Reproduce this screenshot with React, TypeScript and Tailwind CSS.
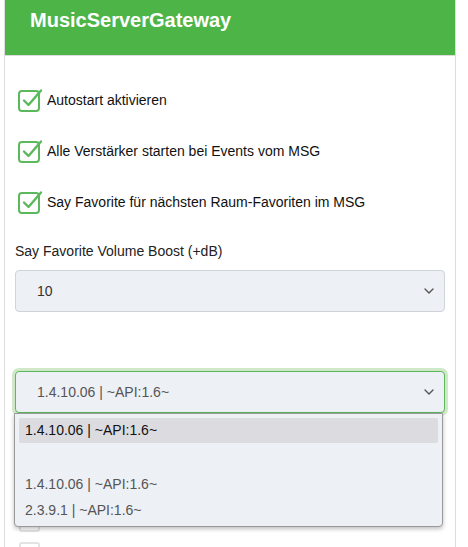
import React from "react";

const font = { fontFamily: '"Liberation Sans", Arial, sans-serif' };

function CheckBox({ checked }: { checked: boolean }) {
  if (!checked) {
    return <div className="w-[21px] h-[21px] rounded-[3px] border-2 border-[#e3e3e3] bg-white shrink-0" />;
  }
  return (
    <svg width="26" height="26" viewBox="0 0 26 26" className="shrink-0 -mt-[3px]">
      <rect x="1" y="5" width="20" height="20" rx="3" fill="none" stroke="#5cb85c" strokeWidth="2" />
      <path d="M6 14.5 L10.5 19 L23 4.5" fill="none" stroke="#5cb85c" strokeWidth="2.4" strokeLinecap="round" strokeLinejoin="round" />
    </svg>
  );
}

function Chevron() {
  return (
    <svg width="10" height="6" viewBox="0 0 10 6" className="shrink-0">
      <path d="M1 1 L5 5 L9 1" fill="none" stroke="#555" strokeWidth="1.4" strokeLinecap="round" strokeLinejoin="round" />
    </svg>
  );
}

const checks = [
  "Autostart aktivieren",
  "Alle Verstärker starten bei Events vom MSG",
  "Say Favorite für nächsten Raum-Favoriten im MSG",
];

const versions = ["1.4.10.06 | ~API:1.6~", "", "1.4.10.06 | ~API:1.6~", "2.3.9.1 | ~API:1.6~"];

export default function App() {
  return (
    <div className="bg-white w-[468px] h-[547px] overflow-hidden" style={font}>
      <div className="ml-[4px] w-[452px] h-[547px] border-x border-[#dddddd]">
        <div className="h-[56px] bg-[#4db548] border-b border-[#dcdcdc] pl-[25px] pt-[8px]">
          <h1 className="text-white font-bold text-[20px] leading-[24px]">MusicServerGateway</h1>
        </div>

        <div className="px-[10px]">
          <div className="pt-[33px] flex flex-col gap-[29px]">
            {checks.map((c) => (
              <div key={c} className="flex items-center gap-[3px] pl-[3px] h-[22px]">
                <CheckBox checked />
                <span className="text-[14px] text-[#111]">{c}</span>
              </div>
            ))}
          </div>

          <div className="mt-[29px] text-[14px] text-[#222] leading-[18px]">Say Favorite Volume Boost (+dB)</div>

          <div className="mt-[10px] h-[42px] rounded-[4px] border border-[#ced4da] bg-[#edf0f4] flex items-center justify-between pl-[21px] pr-[10px]">
            <span className="text-[14px] text-[#333]">10</span>
            <Chevron />
          </div>

          <div className="relative mt-[59px]">
            <div className="h-[42px] rounded-[4px] border border-[#5cb85c] bg-[#edf0f4] shadow-[0_0_0_3px_#cfe8c8] flex items-center justify-between pl-[21px] pr-[10px]">
              <span className="text-[14px] text-[#555]">1.4.10.06 | ~API:1.6~</span>
              <Chevron />
            </div>

            <div className="mt-[97px] flex flex-col gap-[9px] pl-[4px]">
              <div className="flex items-center gap-[8px] h-[22px]">
                <CheckBox checked={false} />
              </div>
              <div className="flex items-center gap-[8px] h-[22px]">
                <CheckBox checked={false} />
                <span className="text-[14px] text-[#111]">Sonos</span>
              </div>
            </div>

            <div className="absolute left-[-1px] top-[42px] w-[429px] h-[114px] rounded-b-[4px] border border-[#9a9a9a] bg-[#edf0f4] shadow-[0_2px_4px_rgba(0,0,0,0.25)] px-[4px] pt-[4px]">
              {versions.map((v, i) => (
                <div
                  key={i}
                  className={
                    i === 0
                      ? "h-[25px] rounded-[2px] bg-[#dcdbe0] flex items-center pl-[6px] text-[14px] text-[#111]"
                      : i === 1
                      ? "h-[28px]"
                      : "h-[26px] flex items-center pl-[6px] text-[14px] text-[#555]"
                  }
                >
                  {v}
                </div>
              ))}
            </div>
          </div>
        </div>
      </div>
    </div>
  );
}
